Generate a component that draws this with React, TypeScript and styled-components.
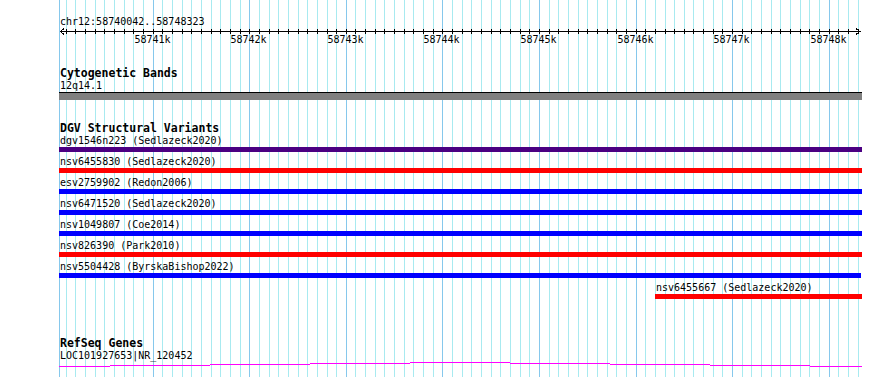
import React from 'react';
import styled, { createGlobalStyle } from 'styled-components';

const GlobalStyle = createGlobalStyle`
  html, body { margin: 0; padding: 0; background: #ffffff; }
  body { font-family: "DejaVu Sans Mono", "Liberation Mono", monospace; color: #000; }
`;

const LEFT = 59;
const WIDTH = 803;
const MAJOR_START = 153.2;
const MINOR_STEP = 9.65714;
const MINOR_COLOR = '#a8eaf0';
const MAJOR_COLOR = '#86c8ec';

type GridLine = { x: number; major: boolean };

const gridLines: GridLine[] = (() => {
  const out: GridLine[] = [{ x: LEFT, major: true }];
  for (let k = -10; k <= 80; k++) {
    const x = Math.floor(MAJOR_START + k * MINOR_STEP);
    if (x > LEFT && x < LEFT + WIDTH) out.push({ x, major: k % 10 === 0 });
  }
  return out;
})();

const majorLabels = ['58741k', '58742k', '58743k', '58744k', '58745k', '58746k', '58747k', '58748k'];

type Feature = { label: string; color: string; start: number; end: number };

const dgv: Feature[] = [
  { label: 'dgv1546n223 (Sedlazeck2020)', color: '#4b0082', start: 59, end: 862 },
  { label: 'nsv6455830 (Sedlazeck2020)', color: '#ff0000', start: 59, end: 862 },
  { label: 'esv2759902 (Redon2006)', color: '#0000ff', start: 59, end: 862 },
  { label: 'nsv6471520 (Sedlazeck2020)', color: '#0000ff', start: 59, end: 862 },
  { label: 'nsv1049807 (Coe2014)', color: '#0000ff', start: 59, end: 862 },
  { label: 'nsv826390 (Park2010)', color: '#ff0000', start: 59, end: 862 },
  { label: 'nsv5504428 (ByrskaBishop2022)', color: '#0000ff', start: 59, end: 861 },
  { label: 'nsv6455667 (Sedlazeck2020)', color: '#ff0000', start: 655, end: 862 },
];

const geneSteps: [number, number, number][] = [
  [59, 110, 366],
  [110, 210, 365],
  [210, 310, 364],
  [310, 410, 363],
  [410, 510, 362],
  [510, 610, 363],
  [610, 710, 364],
  [710, 810, 365],
  [810, 862, 366],
];

const Page = styled.div`
  position: relative;
  width: 890px;
  height: 377px;
  overflow: hidden;
  background: #ffffff;
`;

const GridLayer = styled.svg`
  position: absolute;
  left: 0;
  top: 0;
  z-index: 0;
  shape-rendering: crispEdges;
`;

const Column = styled.div`
  position: relative;
  z-index: 1;
  display: flex;
  flex-direction: column;
  margin-left: ${LEFT}px;
  width: ${WIDTH}px;
  padding-top: 16px;
`;

const SmallText = styled.div`
  font-size: 10px;
  line-height: 12px;
  height: 12px;
  white-space: nowrap;
  padding-left: 1px;
`;

const RulerSvg = styled.svg`
  display: block;
  shape-rendering: crispEdges;
  overflow: visible;
`;

const TrackTitle = styled.div<{ $gap: number }>`
  margin-top: ${(p) => p.$gap}px;
  font-size: 11.5px;
  font-weight: bold;
  line-height: 14px;
  height: 14px;
  white-space: nowrap;
  padding-left: 1px;
`;

const Band = styled.div`
  height: 7px;
  border-top: 1px solid #000;
  background: #808080;
`;

const FeatureRow = styled.div<{ $offset: number; $width: number }>`
  display: flex;
  flex-direction: column;
  margin-left: ${(p) => p.$offset}px;
  width: ${(p) => p.$width}px;
  margin-bottom: 4px;
`;

const FeatureBar = styled.div<{ $color: string }>`
  height: 5px;
  background: ${(p) => p.$color};
`;

const GeneSvg = styled.svg`
  display: block;
  shape-rendering: crispEdges;
`;

const Ruler: React.FC = () => {
  const majors = gridLines.filter((g) => g.major && g.x !== LEFT);
  return (
    <RulerSvg width={WIDTH} height={20} viewBox={`0 0 ${WIDTH} 20`}>
      <rect x={1} y={3} width={WIDTH - 2} height={1} fill="#000" />
      {gridLines
        .filter((g) => g.x !== LEFT)
        .map((g) => (
          <rect key={g.x} x={g.x - LEFT} y={1} width={1} height={5} fill="#000" />
        ))}
      <polyline points="5,0.5 1.5,3.5 5,6.5" fill="none" stroke="#000" strokeWidth={1} />
      <polyline points={`${WIDTH - 6},0.5 ${WIDTH - 2.5},3.5 ${WIDTH - 6},6.5`} fill="none" stroke="#000" strokeWidth={1} />
      {majors.map((g, i) => (
        <text
          key={g.x}
          x={g.x - LEFT - 0.5}
          y={15}
          textAnchor="middle"
          fontSize={10}
          fontFamily='"DejaVu Sans Mono", "Liberation Mono", monospace'
          fill="#000"
          style={{ shapeRendering: 'auto' } as React.CSSProperties}
        >
          {majorLabels[i]}
        </text>
      ))}
    </RulerSvg>
  );
};

const App: React.FC = () => (
  <>
    <GlobalStyle />
    <Page>
      <GridLayer width={890} height={377} viewBox="0 0 890 377">
        {gridLines.map((g) => (
          <rect key={g.x} x={g.x} y={0} width={1} height={377} fill={g.major ? MAJOR_COLOR : MINOR_COLOR} />
        ))}
      </GridLayer>
      <Column>
        <SmallText>chr12:58740042..58748323</SmallText>
        <Ruler />
        <TrackTitle $gap={18}>Cytogenetic Bands</TrackTitle>
        <SmallText>12q14.1</SmallText>
        <Band />
        <TrackTitle $gap={21}>DGV Structural Variants</TrackTitle>
        {dgv.map((f) => (
          <FeatureRow key={f.label} $offset={f.start - LEFT} $width={f.end - f.start}>
            <SmallText>{f.label}</SmallText>
            <FeatureBar $color={f.color} />
          </FeatureRow>
        ))}
        <TrackTitle $gap={33}>RefSeq Genes</TrackTitle>
        <SmallText>LOC101927653|NR_120452</SmallText>
        <GeneSvg width={WIDTH} height={6} viewBox={`0 0 ${WIDTH} 6`}>
          {geneSteps.map(([a, b, y]) => (
            <rect key={a} x={a - LEFT} y={y - 362} width={b - a} height={1} fill="#ff00ff" />
          ))}
        </GeneSvg>
      </Column>
    </Page>
  </>
);

export default App;
